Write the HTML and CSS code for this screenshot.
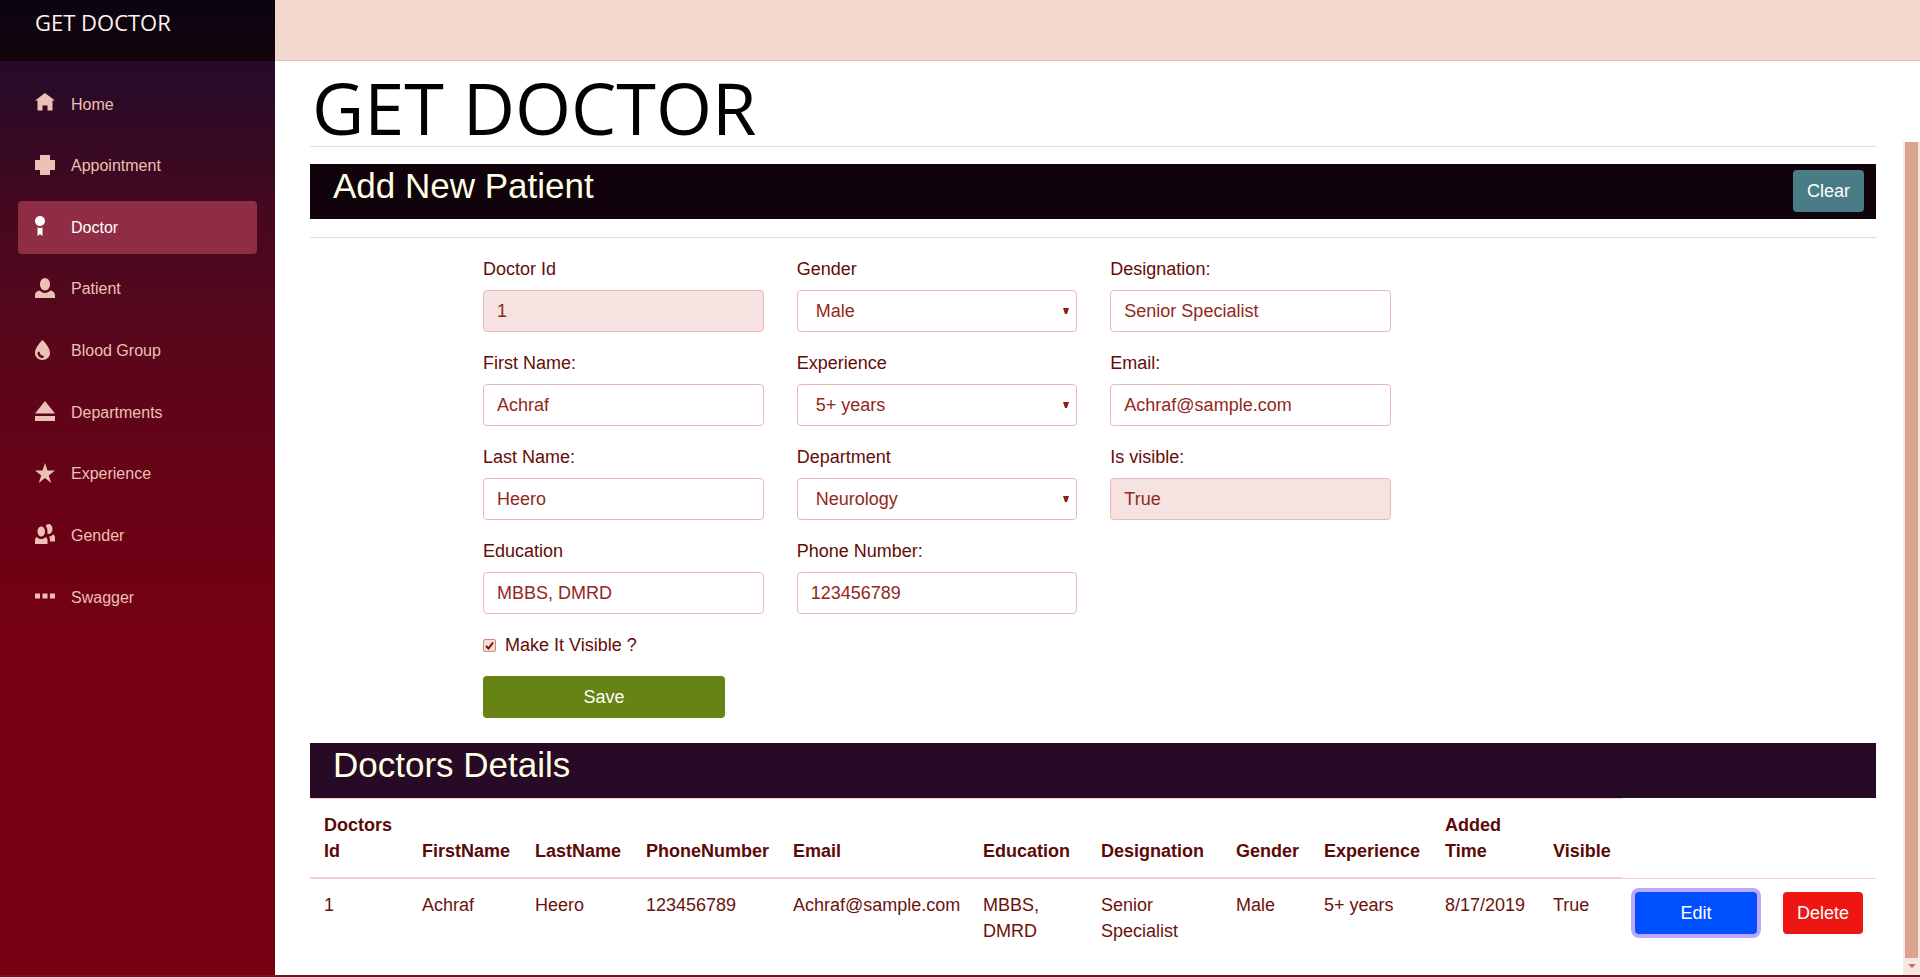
FILE: index.html
```html
<!DOCTYPE html>
<html lang="en">
<head>
<meta charset="utf-8">
<title>Get Doctor</title>
<link rel="stylesheet" href="styles.css">
</head>
<body>
<div class="app">
  <aside class="sidebar">
    <div class="sidebar-top"><a class="brand" href="#">GET DOCTOR</a></div>
    <nav>
      <ul class="nav-list">
        <li><a class="nav-link" href="#"><svg class="icon" viewBox="0 0 8 8"><path d="M4 0l-4 3h1v4h2v-2h2v2h2v-4.03l1 .03-4-3z"/></svg>Home</a></li>
        <li><a class="nav-link" href="#"><svg class="icon" viewBox="0 0 8 8"><path d="M2 0v2h-2v4h2v2h4v-2h2v-4h-2v-2h-4z"/></svg>Appointment</a></li>
        <li><a class="nav-link active" href="#"><svg class="icon" viewBox="0 0 8 8"><path d="M2 0c-1.1 0-2 .9-2 2s.9 2 2 2 2-.9 2-2-.9-2-2-2zm-1 4.600v3.400l1-.7 1 .7v-3.400c-.31.11-.65.19-1 .19s-.69-.08-1-.19z"/></svg>Doctor</a></li>
        <li><a class="nav-link" href="#"><svg class="icon" viewBox="0 0 8 8"><path d="M4 0c-1.1 0-2 1.12-2 2.5s.9 2.5 2 2.5 2-1.12 2-2.5-.9-2.5-2-2.5zm-2.09 5c-1.06.05-1.91.92-1.91 2v1h8v-1c0-1.08-.84-1.95-1.91-2-.54.61-1.28 1-2.09 1-.81 0-1.55-.39-2.09-1z"/></svg>Patient</a></li>
        <li><a class="nav-link" href="#"><svg class="icon" viewBox="0 0 8 8"><path d="M3 0l-.34.34c-.11.11-2.66 2.69-2.66 4.88 0 1.65 1.35 2.78 3 2.78s3-1.13 3-2.78c0-2.18-2.55-4.77-2.66-4.88l-.34-.34zm-1.5 4.72c.28 0 .5.22.5.5 0 .55.45 1 1 1 .28 0 .5.22.5.5s-.22.5-.5.5c-1.1 0-2-.9-2-2 0-.28.22-.5.5-.5z"/></svg>Blood Group</a></li>
        <li><a class="nav-link" href="#"><svg class="icon" viewBox="0 0 8 8"><path d="M4 0l-4 5h8l-4-5zm-4 6v2h8v-2h-8z"/></svg>Departments</a></li>
        <li><a class="nav-link" href="#"><svg class="icon" viewBox="0 0 8 8"><path d="M4 0l-1 3h-3l2.5 2-1 3 2.5-2 2.5 2-1-3 2.5-2h-3l-1-3z"/></svg>Experience</a></li>
        <li><a class="nav-link" href="#"><svg class="icon" viewBox="0 0 8 8"><path d="M5.5 0c-.51 0-.95.35-1.22.88.45.54.72 1.28.72 2.13 0 .29-.03.55-.09.81.19.11.38.19.59.19.83 0 1.5-.9 1.5-2s-.67-2-1.5-2zm-3 1c-.83 0-1.5.9-1.5 2s.67 2 1.5 2 1.5-.9 1.5-2-.67-2-1.5-2zm4.75 3.16c-.43.51-1.02.82-1.69.84.27.38.44.84.44 1.34v.66h2v-1.66c0-.52-.31-.97-.75-1.19zm-6.5 1c-.44.22-.75.67-.75 1.19v1.66h5v-1.66c0-.52-.31-.97-.75-1.19-.45.53-1.06.84-1.75.84s-1.3-.32-1.75-.84z"/></svg>Gender</a></li>
        <li><a class="nav-link" href="#"><svg class="icon" viewBox="0 0 8 8"><path d="M0 3v2h2v-2h-2zm3 0v2h2v-2h-2zm3 0v2h2v-2h-2z"/></svg>Swagger</a></li>
      </ul>
    </nav>
  </aside>

  <div class="main">
    <header class="top-row"></header>
    <div class="body">
      <main class="content">
        <h1 class="logo">GET DOCTOR</h1>

        <div class="bar bar-form">
          <h2>Add New Patient</h2>
          <button class="btn btn-clear" type="button">Clear</button>
        </div>

        <form class="doctor-form">
          <div class="fields">
            <div class="field"><label for="doctorId">Doctor Id</label><input class="control" id="doctorId" value="1" disabled></div>
            <div class="field"><label for="gender">Gender</label>
              <div class="select-box"><select class="control" id="gender"><option>Male</option></select><svg class="caret" viewBox="0 0 6 6"><path d="M0 0h6l-2 6h-2z"/></svg></div></div>
            <div class="field"><label for="designation">Designation:</label><input class="control" id="designation" value="Senior Specialist"></div>

            <div class="field"><label for="firstName">First Name:</label><input class="control" id="firstName" value="Achraf"></div>
            <div class="field"><label for="experience">Experience</label>
              <div class="select-box"><select class="control" id="experience"><option>5+ years</option></select><svg class="caret" viewBox="0 0 6 6"><path d="M0 0h6l-2 6h-2z"/></svg></div></div>
            <div class="field"><label for="email">Email:</label><input class="control" id="email" value="Achraf@sample.com"></div>

            <div class="field"><label for="lastName">Last Name:</label><input class="control" id="lastName" value="Heero"></div>
            <div class="field"><label for="department">Department</label>
              <div class="select-box"><select class="control" id="department"><option>Neurology</option></select><svg class="caret" viewBox="0 0 6 6"><path d="M0 0h6l-2 6h-2z"/></svg></div></div>
            <div class="field"><label for="isVisible">Is visible:</label><input class="control" id="isVisible" value="True" disabled></div>

            <div class="field"><label for="education">Education</label><input class="control" id="education" value="MBBS, DMRD"></div>
            <div class="field"><label for="phone">Phone Number:</label><input class="control" id="phone" value="123456789"></div>
          </div>
          <div class="check-row">
            <span class="check-box"><input type="checkbox" id="makeVisible" checked><svg class="tick" viewBox="0 0 13 13"><path d="M3 7l2.500 2.500L10 3.500"/></svg></span>
            <label for="makeVisible">Make It Visible ?</label>
          </div>
          <button class="btn btn-save" type="button">Save</button>
        </form>

        <div class="bar bar-list"><h2>Doctors Details</h2></div>

        <table class="doctors">
          <colgroup>
            <col class="c-id"><col class="c-first"><col class="c-last"><col class="c-phone"><col class="c-email"><col class="c-edu"><col class="c-desig"><col class="c-gender"><col class="c-exp"><col class="c-added"><col class="c-visible"><col class="c-edit"><col class="c-delete">
          </colgroup>
          <thead>
            <tr><th>Doctors Id</th><th>FirstName</th><th>LastName</th><th>PhoneNumber</th><th>Email</th><th>Education</th><th>Designation</th><th>Gender</th><th>Experience</th><th>Added Time</th><th>Visible</th></tr>
          </thead>
          <tbody>
            <tr><td>1</td><td>Achraf</td><td>Heero</td><td>123456789</td><td>Achraf@sample.com</td><td>MBBS, DMRD</td><td>Senior Specialist</td><td>Male</td><td>5+ years</td><td>8/17/2019</td><td>True</td><td><button class="btn btn-edit" type="button">Edit</button></td><td><button class="btn btn-delete" type="button">Delete</button></td></tr>
          </tbody>
        </table>
      </main>
      <div class="scrollbar">
        <div class="thumb"></div>
        <svg class="scroll-arrow" viewBox="0 0 8 4"><path d="M0 0h8l-4 4z"/></svg>
      </div>
    </div>
  </div>
</div>
</body>
</html>
```
FILE: styles.css
```css
* { box-sizing: border-box; }

body {
  margin: 0;
  background: #fff;
  color: #6b120c;
  font-family: "Liberation Sans", Arial, sans-serif;
  font-size: 18px;
  line-height: 26px;
}

.app {
  display: flex;
  min-height: 100vh;
  border-bottom: 2px solid #75150f;
}

/* Sidebar */
.sidebar {
  flex: 0 0 275px;
  background: linear-gradient(180deg, #1c0b2c 0%, #270b28 8%, #42081f 20%, #57071c 33%, #690216 51%, #780013 68%);
}

.sidebar-top {
  height: 61px;
  padding-left: 35px;
  background: linear-gradient(180deg, #0c0412, #14050c);
}

.brand {
  color: #fff3ee;
  font-family: "Open Sans", sans-serif;
  font-size: 22px;
  line-height: 44px;
  text-decoration: none;
}

.nav-list {
  display: flex;
  flex-direction: column;
  justify-content: space-between;
  min-height: 546px;
  margin: 17px 18px;
  padding: 0;
  list-style: none;
}

.nav-link {
  display: flex;
  align-items: center;
  gap: 16px;
  height: 53px;
  padding-left: 17px;
  border-radius: 4px;
  color: #ecc0b4;
  font-size: 16px;
  text-decoration: none;
}

.nav-link.active { background: #8f2d45; color: #fff; }

.icon {
  width: 20px;
  height: 20px;
  margin-bottom: 3px;
  fill: currentColor;
}

/* Main column */
.main {
  display: flex;
  flex: 1;
  flex-direction: column;
  min-width: 0;
}

.top-row {
  height: 61px;
  border-bottom: 1px solid #e6bfb1;
  background: #f3d8d0;
}

.body { display: flex; flex: 1; }

.content {
  flex: 1;
  min-width: 0;
  padding: 0 26px 0 35px;
}

.logo {
  margin: 0 0 17px;
  padding: 8px 0 0 2px;
  border-bottom: 1px solid #f3d8d0;
  color: #050102;
  font: 400 72px/77px "Open Sans", sans-serif;
}

.bar {
  display: flex;
  justify-content: space-between;
  align-items: flex-start;
  height: 55px;
  margin-right: 1px;
  padding: 1px 12px 0 23px;
}

.bar h2 {
  margin: 0;
  color: #ffffe4;
  font-size: 35px;
  font-weight: 400;
  line-height: 42px;
}

.bar-form { background: #10030c; }
.bar-list { background: #270b26; }

/* Buttons */
.btn {
  height: 42px;
  padding: 0 14px;
  border: 0;
  border-radius: 4px;
  color: #fff;
  font: inherit;
}

.btn-clear { margin-top: 5px; background: #4a7c86; }
.btn-save { display: block; width: 242px; background: #668313; }
.btn-edit { width: 100%; background: #0050ff; box-shadow: 0 0 0 4px #bfa8fb; }
.btn-delete { width: 100%; padding: 0; background: #ee1512; }

/* Form */
.doctor-form {
  margin-top: 18px;
  padding: 18px 0 25px 173px;
  border-top: 1px solid #f0d5d0;
}

.fields {
  display: grid;
  grid-template-columns: repeat(3, 1fr);
  gap: 18px 33px;
  max-width: 908px;
}

.field label { display: block; margin-bottom: 8px; }
.doctor-form label { color: #640c07; }

.control {
  display: block;
  width: 100%;
  height: 42px;
  padding: 0 13px;
  border: 1px solid #e8b9b5;
  border-radius: 4px;
  background: #fff;
  color: #92281c;
  font: inherit;
}

.control:disabled { background: #f5e2e1; opacity: 1; }

.select-box { position: relative; }
.select-box .control { padding-left: 18px; appearance: none; }

.caret {
  position: absolute;
  top: 18px;
  right: 8px;
  width: 6px;
  height: 6px;
  fill: #8a2018;
  pointer-events: none;
}

.check-row {
  display: flex;
  align-items: center;
  gap: 9px;
  margin: 18px 0;
}

.check-box { position: relative; width: 13px; height: 13px; }

.check-box input {
  display: block;
  width: 13px;
  height: 13px;
  margin: 0;
  border: 1px solid #cc8a7c;
  border-radius: 2px;
  background: #f6dcd6;
  appearance: none;
}

.tick {
  position: absolute;
  inset: 0;
  fill: none;
  stroke: #6e1208;
  stroke-width: 2;
  pointer-events: none;
}

/* Table */
.doctors {
  width: calc(100% - 1px);
  border-collapse: separate;
  border-spacing: 0;
  table-layout: fixed;
}

.doctors th,
.doctors td {
  padding: 13px 8px 13px 14px;
  border-top: 1px solid #efd0cc;
  text-align: left;
  vertical-align: top;
}

.doctors th {
  border-bottom: 1px solid #efd0cc;
  color: #5c0a08;
  vertical-align: bottom;
}

.doctors td:nth-last-child(-n+2) { padding: 13px; }

.c-id { width: 98px; }
.c-first { width: 113px; }
.c-last { width: 111px; }
.c-phone { width: 147px; }
.c-email { width: 190px; }
.c-edu { width: 118px; }
.c-desig { width: 135px; }
.c-gender { width: 88px; }
.c-exp { width: 121px; }
.c-added { width: 108px; }
.c-visible { width: 83px; }
.c-edit { width: 148px; }
.c-delete { width: 106px; }

/* Scroll track */
.scrollbar {
  display: flex;
  flex-direction: column;
  align-items: center;
  width: 17px;
  margin-top: 81px;
  padding-bottom: 7px;
  background: #f7e6e1;
}

.thumb { flex: 1; width: 13px; margin-bottom: 6px; background: #dda391; }
.scroll-arrow { width: 8px; height: 4px; fill: #c9735c; }
```
